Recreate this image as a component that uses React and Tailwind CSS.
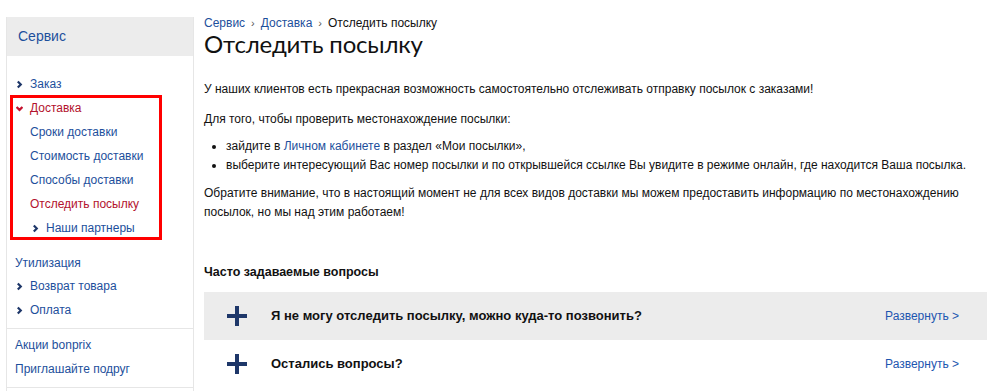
import React from "react";

const Chevron = ({ down = false, className = "" }) => (
  <svg className={className} width="7" height="9" viewBox="0 0 7 9" fill="none" stroke="currentColor" strokeWidth="2.2">
    {down ? <path d="M0.6 3l2.9 2.9L6.4 3" /> : <path d="M1.8 1.4l3 3.1-3 3.1" />}
  </svg>
);

const Plus = () => (
  <svg width="20" height="20" viewBox="0 0 20 20" className="shrink-0">
    <rect x="8" y="0" width="4" height="20" fill="#1e3769" />
    <rect x="0" y="8" width="20" height="4" fill="#1e3769" />
  </svg>
);

function SideLink({ children, chevron, active, down, pad = "pl-[9px]" }) {
  return (
    <div className={`h-6 flex items-center ${pad}`}>
      {chevron && <Chevron down={down} className={`mr-[7px] shrink-0 ${active ? "text-[#c4122f]" : "text-[#1e3769]"}`} />}
      <span className={active ? "text-[#b3122d]" : "text-[#1d4f9c]"}>{children}</span>
    </div>
  );
}

function FaqRow({ title, gray }) {
  return (
    <div className={`h-12 flex items-center pl-[23px] pr-[28px] ${gray ? "bg-[#ececec]" : "bg-white"}`}>
      <Plus />
      <span className="ml-[24px] font-bold text-[13px] text-[#111]">{title}</span>
      <span className="ml-auto text-[#1d56b0] text-[12px]">Развернуть &gt;</span>
    </div>
  );
}

export default function App() {
  return (
    <div className="w-[987px] h-[391px] overflow-hidden bg-white font-['Liberation_Sans',Arial,sans-serif] text-[12px] text-[#111] flex pt-[17px]">
      <aside className="ml-[6px] w-[188px] shrink-0 border-x border-[#e6e6e6]">
        <div className="h-[39px] bg-[#ececec] flex items-center pl-[11px] text-[14px] text-[#1d4f9c]">Сервис</div>
        <div className="pt-[15px] text-[12px]">
          <div className="pt-[1px]">
            <SideLink chevron>Заказ</SideLink>
          </div>
          <div className="ml-[3px] -mt-[1px] w-[152px] ring-[3px] ring-inset ring-[#ff0000]">
            <div className="pt-[1px]">
              <SideLink chevron down active pad="pl-[6px]">Доставка</SideLink>
            </div>
            <SideLink pad="pl-[20px]">Сроки доставки</SideLink>
            <SideLink pad="pl-[20px]">Стоимость доставки</SideLink>
            <SideLink pad="pl-[20px]">Способы доставки</SideLink>
            <SideLink active pad="pl-[20px]">Отследить посылку</SideLink>
            <SideLink chevron pad="pl-[22px]">Наши партнеры</SideLink>
          </div>
          <div className="pt-[11px]">
            <div className="h-6 flex items-center pl-[8px] text-[#1d4f9c]">Утилизация</div>
            <div className="-mt-[1px]">
              <SideLink chevron>Возврат товара</SideLink>
            </div>
            <SideLink chevron>Оплата</SideLink>
          </div>
          <div className="mt-[6px] border-t border-[#e6e6e6] pt-[4px] pl-[8px] text-[#1d4f9c]">
            <div className="h-6 flex items-center">Акции bonprix</div>
            <div className="h-6 flex items-center">Приглашайте подруг</div>
          </div>
          <div className="mt-[6px] border-t border-[#e6e6e6]" />
        </div>
      </aside>

      <main className="ml-[10px] flex-1 min-w-0">
        <div className="flex items-center gap-[6px] text-[12px] h-[12px]">
          <span className="text-[#1d4f9c]">Сервис</span>
          <span className="text-[#555] text-[11px]">›</span>
          <span className="text-[#1d4f9c]">Доставка</span>
          <span className="text-[#555] text-[11px]">›</span>
          <span className="text-[#111]">Отследить посылку</span>
        </div>
        <h1 className="mt-[1px] text-[24px] leading-[28px] font-['Lato',sans-serif] font-normal tracking-[-0.2px] text-[#111]">Отследить посылку</h1>

        <div className="mt-[22px] leading-[19px]">
          <p>У наших клиентов есть прекрасная возможность самостоятельно отслеживать отправку посылок с заказами!</p>
          <p className="mt-[11px]">Для того, чтобы проверить местонахождение посылки:</p>
          <ul className="mt-[8px] list-disc pl-[22px]">
            <li>
              зайдите в <span className="text-[#1d4f9c]">Личном кабинете</span> в раздел «Мои посылки»,
            </li>
            <li>выберите интересующий Вас номер посылки и по открывшейся ссылке Вы увидите в режиме онлайн, где находится Ваша посылка.</li>
          </ul>
          <p className="mt-[9px] pr-[20px]">
            Обратите внимание, что в настоящий момент не для всех видов доставки мы можем предоставить информацию по местонахождению посылок, но мы над этим работаем!
          </p>
        </div>

        <h2 className="mt-[41px] font-bold text-[12.5px]">Часто задаваемые вопросы</h2>
        <div className="mt-[10px]">
          <FaqRow gray title="Я не могу отследить посылку, можно куда-то позвонить?" />
          <FaqRow title="Остались вопросы?" />
        </div>
      </main>
    </div>
  );
}
